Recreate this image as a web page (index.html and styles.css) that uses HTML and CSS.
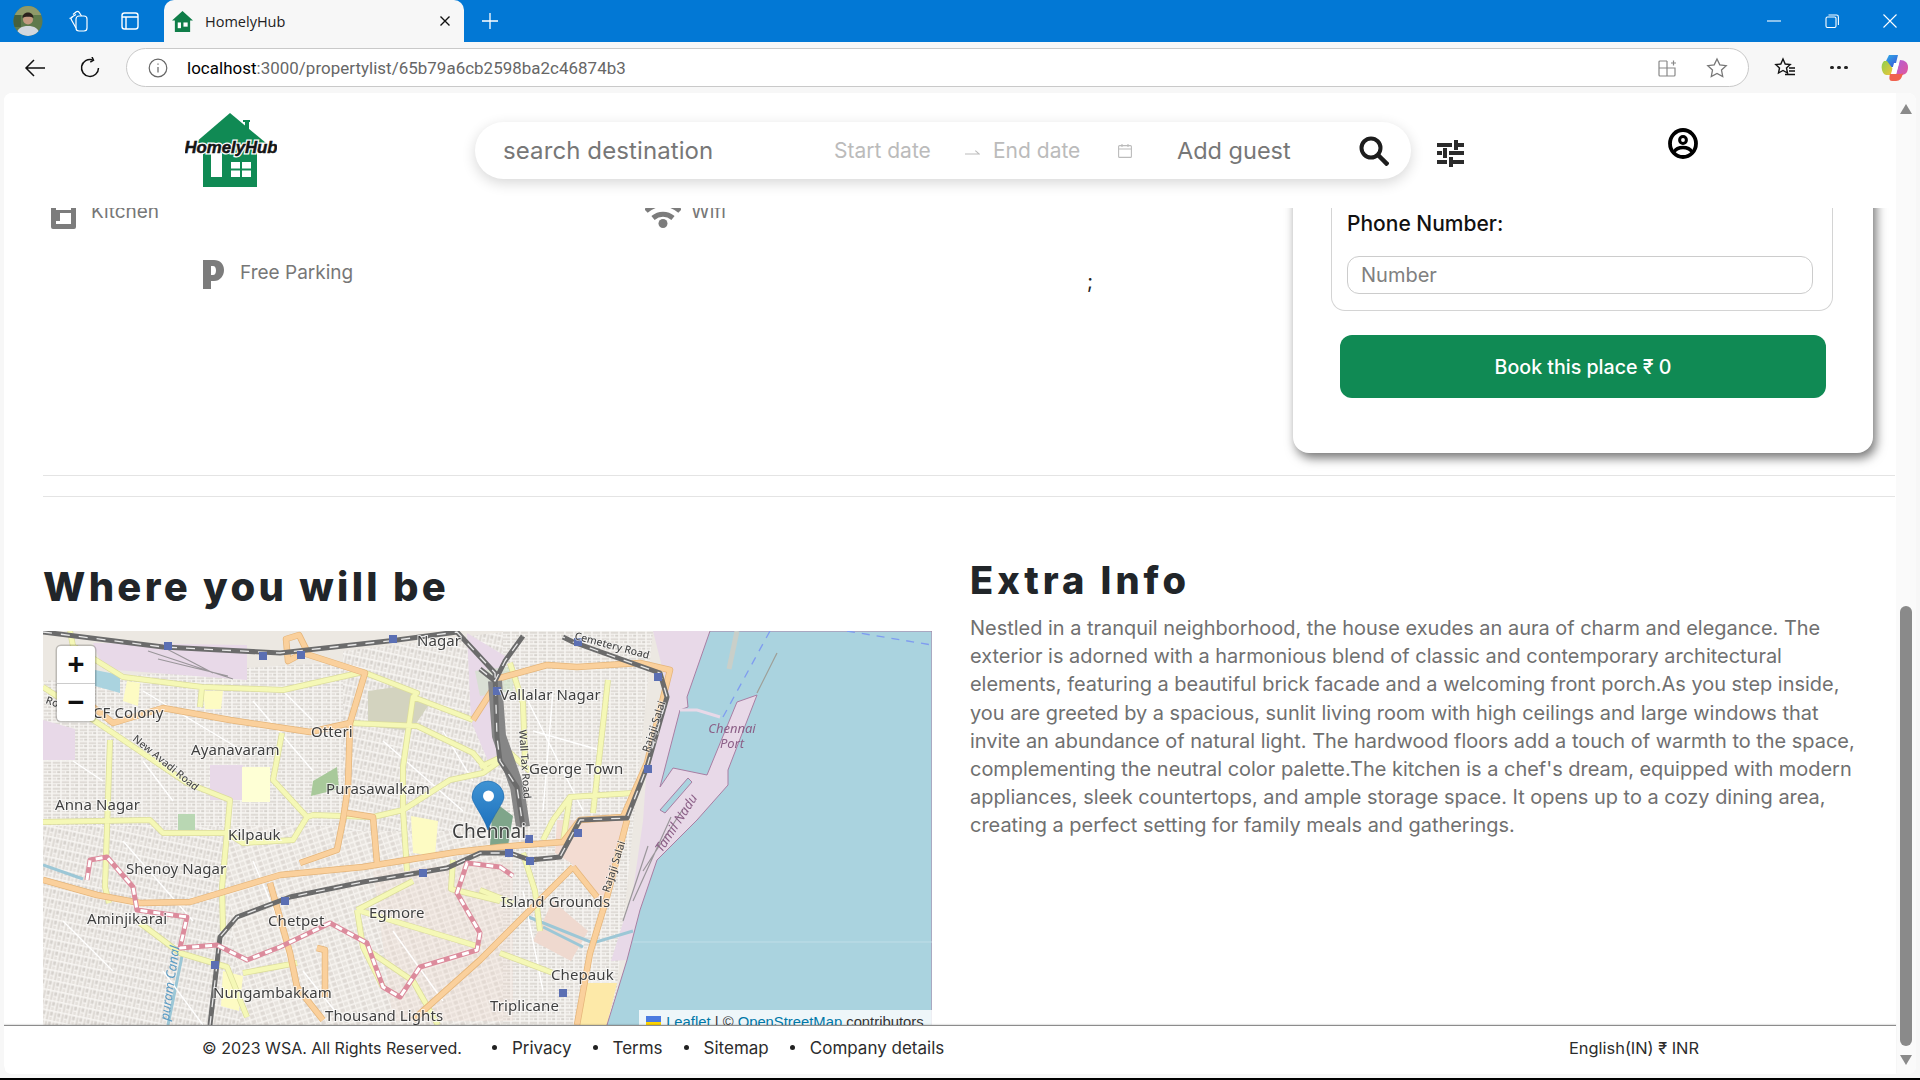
FILE: index.html
```html
<!DOCTYPE html>
<html lang="en">
<head>
<meta charset="utf-8">
<title>HomelyHub</title>
<link rel="stylesheet" href="styles.css">
</head>
<body>
<div class="window">
  <div class="titlebar">
    <svg class="avatar" viewBox="0 0 30 30"><defs><clipPath id="av"><ellipse cx="15" cy="15" rx="14.500" ry="15"/></clipPath></defs><g clip-path="url(#av)"><rect width="30" height="30" fill="#5f7a4c"/><rect y="0" width="30" height="9" fill="#8f9a6a"/><rect x="0" y="9" width="8" height="12" fill="#47603c"/><path d="M3 30c1-8 6-10 12-10s11 2 12 10z" fill="#d3d8de"/><circle cx="15" cy="13.500" r="5" fill="#c39a80"/><path d="M9.500 12c0-4 3-5.500 5.500-5.500s5.500 1.500 5.500 5.500c-2-1.800-9-1.800-11 0z" fill="#2a211c"/></g></svg>
    <svg class="tb-icon tb-collections" viewBox="0 0 24 24" fill="none" stroke="#fff" stroke-width="1.200"><rect x="10" y="7" width="11" height="15" rx="3"/><path d="M10 19 5.500 11c-.8-1.400-.4-2.600.8-3.300L10 5.600M6.800 8 3.500 9.500M7 5.500l3-2.500c1.200-.8 2.400-.6 3.200.4L15.500 7"/></svg>
    <svg class="tb-icon tb-tabs" viewBox="0 0 24 24" fill="none" stroke="#fff" stroke-width="1.400"><rect x="4" y="4" width="16" height="16" rx="2.500"/><path d="M4 8h16M8 8v12" /></svg>
    <div class="tab">
      <svg class="favicon" viewBox="0 0 22 22"><path d="M11 0 22 10H19V22H3V10H0Z" fill="#0f7d48"/><rect x="6" y="12" width="3.400" height="6" fill="#fff"/><rect x="12" y="12" width="4.400" height="4.400" fill="#fff"/></svg>
      <span class="tab-title">HomelyHub</span>
      <svg class="tab-close" viewBox="0 0 12 12" stroke="#111" stroke-width="1.400"><path d="M1.500 1.500l9 9M10.500 1.500l-9 9"/></svg>
    </div>
    <svg class="tab-new" viewBox="0 0 18 18" stroke="#fff" stroke-width="1.300"><path d="M9 1v16M1 9h16"/></svg>
    <div class="win-controls">
      <svg viewBox="0 0 14 14" stroke="#fff" stroke-width="1.100" fill="none"><path d="M0 7h14"/></svg>
      <svg viewBox="0 0 14 14" stroke="#fff" stroke-width="1.100" fill="none"><rect x="1" y="3" width="10" height="10.500" rx="1.500"/><path d="M3.500 1h8c1.200 0 1.900.7 1.900 1.900V11"/></svg>
      <svg viewBox="0 0 14 14" stroke="#fff" stroke-width="1.100" fill="none"><path d="M.5.5l13 13M13.500.5l-13 13"/></svg>
    </div>
  </div>

  <div class="toolbar">
    <svg class="nav-ic ic-back" viewBox="0 0 22 22" fill="none" stroke="#111" stroke-width="1.500"><path d="M21 11H2M10 3l-8 8 8 8"/></svg>
    <svg class="nav-ic ic-reload" viewBox="0 0 22 22" fill="none" stroke="#111" stroke-width="1.500"><path d="M13.500 2.800A8.500 8.500 0 1 0 19.500 11"/><path d="M13 0l1.500 3.200-3.200 2"/></svg>
    <div class="address">
      <svg class="ic-info" viewBox="0 0 20 20" fill="none" stroke="#666" stroke-width="1.200"><circle cx="10" cy="10" r="8.800"/><path d="M10 9v5.500M10 5.500v1.300"/></svg>
      <span class="url"><span class="url-host">localhost</span>:3000/propertylist/65b79a6cb2598ba2c46874b3</span>
      <svg class="addr-ic" viewBox="0 0 20 20" fill="none" stroke="#888" stroke-width="1.200"><path d="M10 3H3a1 1 0 0 0-1 1v13a1 1 0 0 0 1 1h14a1 1 0 0 0 1-1v-7H2M10 3v15M14 5h5M16.500 2.500v5"/></svg>
      <svg class="addr-ic addr-star" viewBox="0 0 22 22" fill="none" stroke="#777" stroke-width="1.300"><path d="M11 2l2.800 5.900 6.400.8-4.700 4.400 1.200 6.400L11 16.400l-5.700 3.100 1.200-6.400L1.800 8.700l6.400-.8z"/></svg>
    </div>
    <svg class="tool-ic ic-favs" viewBox="0 0 22 22" fill="none" stroke="#111" stroke-width="1.400"><path d="M9 2l2.200 5 5 .6-3.700 3.400 1 5L9 13.500 4.500 16l1-5L1.800 7.600l5-.6zM15 11h6M15 14h6M11 17.500h10"/></svg>
    <div class="ic-dots"><i></i><i></i><i></i></div>
    <svg class="ic-copilot" viewBox="0 0 28 28"><defs><linearGradient id="cp1" x1="0" y1="0" x2="1" y2="1"><stop offset="0" stop-color="#2fb6e8"/><stop offset="1" stop-color="#3a4fd8"/></linearGradient><linearGradient id="cp2" x1="0" y1="0" x2="1" y2="1"><stop offset="0" stop-color="#b05fd8"/><stop offset="1" stop-color="#e3569a"/></linearGradient><linearGradient id="cp3" x1="0" y1="0" x2="1" y2="1"><stop offset="0" stop-color="#8ccf4f"/><stop offset="1" stop-color="#f2c63a"/></linearGradient></defs><path d="M8 1h9l-3 12H2z" fill="url(#cp1)"/><path d="M19 6c5 0 8 3 8 7 0 6-3 8-7 8h-5z" fill="url(#cp2)"/><path d="M6 7H3C1 9 0 12 1 16c1 4 3 5 5 5h4l2-6z" fill="url(#cp3)"/><path d="M9 20h10c1 0 2 0 3-1-1 5-3 8-7 8h-4c-3 0-3-3-2-7z" fill="#f0624f"/><path d="M13 9h5l-3 11h-5z" fill="#fff"/></svg>
  </div>

  <div class="page">
    <div class="page-main">
      <header class="nav">
        <svg class="logo" viewBox="0 0 92 76">
          <path d="M45 0 81 30H10Z" fill="#108a54"/><path d="M58 7h7v2h-1v12h-4V9h-2z" fill="#108a54"/>
          <rect x="18" y="30" width="54" height="44" fill="#108a54"/>
          <rect x="26" y="40" width="11" height="24" fill="#fff"/>
          <rect x="46" y="49" width="9" height="6.500" fill="#fff"/><rect x="57" y="49" width="9" height="6.500" fill="#fff"/><rect x="46" y="57.500" width="9" height="6.500" fill="#fff"/><rect x="57" y="57.500" width="9" height="6.500" fill="#fff"/>
          <text class="logo-halo" x="46" y="40" text-anchor="middle">HomelyHub</text>
          <text class="logo-text" x="46" y="40" text-anchor="middle">HomelyHub</text>
        </svg>
        <div class="search">
          <span class="s-dest">search destination</span>
          <span class="s-date s-start">Start date</span>
          <svg class="s-arrow" viewBox="0 0 16 8" fill="none" stroke="#bbb" stroke-width="1.200"><path d="M0 5h15L11 1.500"/></svg>
          <span class="s-date s-end">End date</span>
          <svg class="s-cal" viewBox="0 0 14 14" fill="none" stroke="#bbb" stroke-width="1.100"><rect x=".6" y="1.600" width="12.800" height="11.800" rx="1"/><path d="M.6 5h12.800M4 0v3M10 0v3"/></svg>
          <span class="s-guest">Add guest</span>
          <svg class="s-go" viewBox="0 0 30 30" fill="none" stroke="#1d1d1d" stroke-width="4"><circle cx="12" cy="12" r="9.500"/><path d="M19 19l10 10" stroke-width="4.500"/></svg>
        </div>
        <svg class="filter" viewBox="0 0 27 27" fill="#2b2b2b"><rect y="3" width="15" height="4"/><rect x="21" y="3" width="6" height="4"/><rect x="17" y="0" width="4" height="10"/><rect y="11" width="5" height="4"/><rect x="12" y="11" width="15" height="4"/><rect x="6" y="8" width="4" height="10"/><rect y="20" width="10" height="4"/><rect x="16" y="20" width="11" height="4"/><rect x="12" y="17" width="4" height="10"/></svg>
        <svg class="profile" viewBox="0 0 30 31" fill="none" stroke="#000" stroke-width="3.800"><ellipse cx="15" cy="15.500" rx="13" ry="13.500"/><circle cx="15" cy="12" r="3.400" stroke-width="3"/><path d="M6 24c2-3.500 5.500-4.500 9-4.500s7 1 9 4.500" stroke-width="3.400"/></svg>
      </header>

      <main class="scroll">
        <section class="top-section">
          <div class="amenities">
            <div class="am-row am-row-1">
              <div class="am am-kitchen">
                <svg class="am-ic-kitchen" viewBox="0 0 25 34" fill="#7c7c7c"><path d="M2 0h21a2 2 0 0 1 2 2v30a2 2 0 0 1-2 2H2a2 2 0 0 1-2-2V2a2 2 0 0 1 2-2zm3 5v10h15V5zm0 13v11h15V18H9v8H5z" fill-rule="evenodd"/></svg>
                <span>Kitchen</span>
              </div>
              <div class="am am-wifi">
                <svg class="am-ic-wifi" viewBox="0 0 36 34" fill="none" stroke="#7c7c7c" stroke-width="5"><path d="M1 17c10-9 24-9 34 0M8 24c6-5 14-5 20 0"/><circle cx="18" cy="29.500" r="4.500" fill="#7c7c7c" stroke="none"/></svg>
                <span>Wifi</span>
              </div>
            </div>
            <div class="am-row am-row-2">
              <div class="am am-parking">
                <svg class="am-ic-p" viewBox="0 0 21 29" fill="#7c7c7c"><path d="M0 0h11c6 0 10 4 10 10s-4 11-10 11H8v8H0zm8 6v9h2c2 0 3-2 3-4.500S12 6 10 6z" fill-rule="evenodd"/></svg>
                <span>Free Parking</span>
              </div>
              <span class="semi">;</span>
            </div>
          </div>
          <aside class="card">
            <div class="card-box">
              <label class="phone-label">Phone Number:</label>
              <div class="phone-input">Number</div>
            </div>
            <button class="book">Book this place ₹ 0</button>
          </aside>
        </section>
        <hr class="rule">
        <hr class="rule rule-2">
        <section class="bottom-section">
          <div class="where">
            <h2 class="where-title">Where you will be</h2>
            <div class="map">
              <svg class="map-svg" viewBox="0 0 889 420" preserveAspectRatio="xMinYMin slice">
                <defs>
                  <pattern id="blocks" width="9" height="6.500" patternUnits="userSpaceOnUse"><rect width="9" height="6.500" fill="#f7f5f2"/><rect x=".7" y=".7" width="7.500" height="2" fill="#dedad5"/><rect x=".7" y="3.700" width="3.500" height="2" fill="#e3dfdb"/><rect x="5.200" y="3.700" width="3" height="2" fill="#d6d2cd"/></pattern>
                  <pattern id="blocks-a" width="7.500" height="10" patternUnits="userSpaceOnUse" patternTransform="rotate(12)"><rect width="7.500" height="10" fill="#f8f6f3"/><rect x=".6" y=".6" width="2.500" height="8.500" fill="#dfdbd6"/><rect x="4" y=".6" width="2.800" height="4" fill="#d6d2cd"/><rect x="4" y="5.800" width="2.800" height="3.200" fill="#e5e1dc"/></pattern>
                  <pattern id="blocks-b" width="11" height="5.500" patternUnits="userSpaceOnUse" patternTransform="rotate(-18)"><rect width="11" height="5.500" fill="#f6f3ef"/><rect x=".6" y=".6" width="4.300" height="3.800" fill="#dfdad5"/><rect x="6" y=".6" width="4" height="3.800" fill="#e7e3de"/></pattern>
                  <linearGradient id="pin" x1="0" y1="0" x2="0" y2="1"><stop offset="0" stop-color="#3f93d3"/><stop offset="1" stop-color="#1c70bd"/></linearGradient>
                  <path id="r-yellow" d="M0 56L70 102 144 152 187 169 179 256 180 300M67 109L62 256 66 272M0 191L107 189 120 202 184 202 200 212 250 209 264 186 270 184 330 186 360 179 407 149 440 142 457 130M239 102L230 149 264 186M320 41L374 62 370 66 360 136 360 179 364 240M307 92L374 95 430 122 445 140M370 66L430 89M410 229L408 258 457 270M314 279L370 250M314 279L437 316M314 279L320 316 340 356M97 292L137 322 184 336 204 386M200 342L254 332M320 316L370 350 395 394M27 0L30 15 80 46 159 56 240 59 320 41M159 56L157 76M565 49L550 182M467 32L480 72 482 130M510 189L500 209M510 189L527 166 590 162M527 166L520 211M480 222L492 260 497 300M437 136L467 122 487 140M437 259L470 272M457 322L510 342"/>
                  <path id="r-orange" d="M40 68L70 92 120 77 187 89 267 101 307 92 322 42 260 22 245 30 243 8 256 4 264 20M307 92L305 156 300 189 294 219 257 232M0 249L54 264 97 272 147 271 237 244 320 236 414 221 457 216 480 214 520 211 537 189 580 186 604 132 627 39 597 32 534 36 504 34 457 47 430 89M227 252L247 322 254 356 280 389M274 317L282 319 282 366M304 182L330 186 334 232M584 189L564 266 547 322 534 394M530 236L437 329 370 389M530 236L554 266"/>
                  <path id="r-rail" d="M0 1L120 16 237 22 354 9 414 1 452 42 454 106 457 130 474 156 480 196M167 394L177 306 194 286 247 266 320 251 404 237 437 222 467 222 487 229 517 226 537 189 584 187 604 136 624 66 617 42 530 11 520 6M437 38L452 50 462 30 480 5"/>
                </defs>
                <rect width="889" height="420" fill="#ece8e2"/>
                <polygon points="0,50 310,30 300,200 0,200" fill="url(#blocks)"/>
                <polygon points="0,195 190,195 230,420 0,420" fill="url(#blocks-a)"/>
                <polygon points="180,195 460,195 460,420 200,420" fill="url(#blocks-b)"/>
                <polygon points="300,20 470,0 470,200 300,200" fill="url(#blocks-a)"/>
                <polygon points="460,0 610,0 570,394 460,394" fill="url(#blocks)"/>
                <polygon points="330,240 470,230 470,390 350,390" fill="#f0d9d2" opacity=".3"/>
                <polygon points="50,12 204,14 204,49 60,38" fill="#e8d9e8"/>
                <path class="yard" d="M105 20L190 48M115 28L185 45M120 16L170 42"/>
                <polygon points="0,89 32,98 32,129 0,129" fill="#e8d9e8"/>
                <polygon points="167,134 200,134 200,169 167,169" fill="#e8d9e8"/>
                <polygon points="199,136 227,136 227,171 199,171" fill="#feffd5"/>
                <polygon points="424,2 462,25 457,130 445,130 428,90" fill="#e8d9e8"/>
                <polygon points="432,40 470,35 470,60 437,65" fill="#cfe3c6" opacity=".6"/>
                <polygon points="514,189 584,190 566,262 553,268 528,232 512,222" fill="#f3dcd2"/>
                <polygon points="510,270 545,300 528,330 490,310" fill="#efd9cf"/>
                <polygon points="52,39 77,44 77,62 52,55" fill="#aad3df"/>
                <polygon points="84,50 97,52 95,75 80,70" fill="#fdfbc3"/>
                <polygon points="160,60 180,60 178,78 162,78" fill="#fdfbc3"/>
                <polygon points="360,55 385,75 368,100 325,95 325,60" fill="#d3d3bf"/>
                <polygon points="135,183 152,183 152,200 135,200" fill="#b9d7b3"/>
                <polygon points="270,150 294,136 296,158 268,165" fill="#a8c99a"/>
                <polygon points="180,340 200,345 196,380 178,375" fill="#fdfbc3"/>
                <polygon points="368,185 395,190 392,225 370,222" fill="#fdfbc3"/>
                <polygon points="450,170 470,185 465,215 447,215" fill="#7fa58a"/>
                <polygon points="610,0 665,0 714,64 685,154 654,189 614,229 597,279 584,329 568,330 590,260 600,190 604,132 625,60" fill="#e8d9e8"/>
                <path class="yard" d="M640 178L600 240M628 186L590 270M605 215L580 290"/>
                <polygon points="544,352 574,352 564,394 534,394" fill="#fde9a8"/>
                <polygon points="667,0 889,0 889,420 556,420 584,329 597,279 614,229 654,189 685,154 685,139 714,64 694,71 664,144 630,137 617,156 637,79 645,76 644,66" fill="#aad3df" stroke="#a87ea3" stroke-width="1"/>
                <polygon points="617,179 645,147 649,151 622,182" fill="#aad3df" stroke="#a87ea3" stroke-width="1"/>
                <path class="pier" d="M637 79L654 79 677 86"/>
                <path class="breakwater" d="M734 22L714 62"/>
                <path class="islet" d="M694 0L686 38"/>
                <path class="boundary" d="M727 0L680 86M804 0L889 14"/>
                <path class="tile-line" d="M590 311H889"/>
                <path class="water-line" d="M0 234L40 248M483 285L550 312 590 300M500 296L540 316M125 394L140 320"/>
                <g class="streets">
                  <path d="M100 60L200 120M210 70L270 140M340 110L420 180M480 60L540 180M490 100L560 120M510 60L500 180M80 210L150 290M210 230L240 300M350 300L400 370M120 340L160 394M260 340L300 390M480 260L500 360M30 130L60 150M100 130L130 170M20 290L70 340M240 60L270 90M400 100L430 150"/>
                </g>
                <use href="#r-yellow" class="casing-y"/>
                <use href="#r-yellow" class="fill-y"/>
                <use href="#r-orange" class="casing-o"/>
                <use href="#r-orange" class="fill-o"/>
                <path class="rail-yard" d="M452 50L456 105 474 156 480 196"/>
                <use href="#r-rail" class="rail-a"/>
                <use href="#r-rail" class="rail-b"/>
                <path class="metro-a" d="M44 249L47 229 64 226 90 256 94 279 144 286 137 317 174 314 204 329 237 316 287 292 324 312 340 356 357 366 377 336 434 319 437 302 414 262 424 232 457 236 470 245"/>
                <path class="metro-b" d="M44 249L47 229 64 226 90 256 94 279 144 286 137 317 174 314 204 329 237 316 287 292 324 312 340 356 357 366 377 336 434 319 437 302 414 262 424 232 457 236 470 245"/>
                <g class="stations">
                  <rect x="121" y="11" width="8" height="8"/><rect x="216" y="21" width="8" height="8"/><rect x="254" y="20" width="8" height="8"/><rect x="346" y="4" width="8" height="8"/>
                  <rect x="450" y="56" width="8" height="8"/><rect x="531" y="7" width="8" height="8"/><rect x="611" y="42" width="8" height="8"/><rect x="601" y="134" width="8" height="8"/>
                  <rect x="482" y="204" width="8" height="8"/><rect x="531" y="198" width="8" height="8"/><rect x="462" y="218" width="8" height="8"/><rect x="483" y="226" width="8" height="8"/>
                  <rect x="376" y="238" width="8" height="8"/><rect x="238" y="266" width="8" height="8"/><rect x="168" y="330" width="8" height="8"/><rect x="516" y="358" width="8" height="8"/>
                </g>
                <g class="labels">
                  <text x="374" y="15">Nagar</text><text x="50" y="87">CF Colony</text><text x="268" y="106">Otteri</text><text x="148" y="124">Ayanavaram</text>
                  <text x="283" y="163">Purasawalkam</text><text x="12" y="179">Anna Nagar</text><text x="185" y="209">Kilpauk</text><text x="83" y="243">Shenoy Nagar</text>
                  <text x="44" y="293">Aminjikarai</text><text x="225" y="295">Chetpet</text><text x="326" y="287">Egmore</text><text x="170" y="367">Nungambakkam</text>
                  <text x="282" y="390">Thousand Lights</text><text class="lb-big" x="409" y="207">Chennai</text><text x="457" y="69">Vallalar Nagar</text><text x="486" y="143">George Town</text>
                  <text x="458" y="276">Island Grounds</text><text x="508" y="349">Chepauk</text><text x="447" y="380">Triplicane</text>
                </g>
                <g class="labels-road">
                  <text transform="translate(89 109) rotate(39)">New Avadi Road</text>
                  <text transform="translate(476 99) rotate(86)">Wall Tax Road</text>
                  <text transform="translate(606 122) rotate(-72)">Rajaji Salai</text>
                  <text transform="translate(566 262) rotate(-72)">Rajaji Salai</text>
                  <text transform="translate(531 8) rotate(15)">Cemetery Road</text>
                  <text transform="translate(2 72) rotate(20)">Ro</text>
                </g>
                <g class="labels-port">
                  <text x="689" y="102" text-anchor="middle">Chennai</text><text x="689" y="117" text-anchor="middle">Port</text>
                  <text transform="translate(619 222) rotate(-57)">Tamil Nadu</text>
                </g>
                <text class="label-canal" transform="translate(126 390) rotate(-82)">puram Canal</text>
                <path class="pin" d="M445 199C440 184 429 172 429 166a16 16 0 0 1 32 0C461 172 450 184 445 199Z"/>
                <circle cx="445.500" cy="165" r="5.500" fill="#fff"/>
              </svg>
              <div class="zoomctl"><span class="zoom-btn">+</span><span class="zoom-btn">−</span></div>
              <div class="attrib">
                <svg class="flag" viewBox="0 0 15 12"><rect width="15" height="6" fill="#4c7be0"/><rect y="6" width="15" height="6" fill="#ffd500"/></svg>
                <a class="attr-link">Leaflet</a> | © <a class="attr-link">OpenStreetMap</a> contributors
              </div>
            </div>
          </div>
          <div class="extra">
            <h2 class="extra-title">Extra Info</h2>
            <p class="extra-text">Nestled in a tranquil neighborhood, the house exudes an aura of charm and elegance. The<br>exterior is adorned with a harmonious blend of classic and contemporary architectural<br>elements, featuring a beautiful brick facade and a welcoming front porch.As you step inside,<br>you are greeted by a spacious, sunlit living room with high ceilings and large windows that<br>invite an abundance of natural light. The hardwood floors add a touch of warmth to the space,<br>complementing the neutral color palette.The kitchen is a chef's dream, equipped with modern<br>appliances, sleek countertops, and ample storage space. It opens up to a cozy dining area,<br>creating a perfect setting for family meals and gatherings.</p>
          </div>
        </section>
      </main>

      <footer class="footer">
        <span>© 2023 WSA. All Rights Reserved.</span>
        <ul class="foot-links">
          <li>Privacy</li><li>Terms</li><li>Sitemap</li><li>Company details</li>
        </ul>
        <span class="foot-lang">English(IN) ₹ INR</span>
      </footer>
    </div>
    <div class="scrollbar">
      <span class="sb-up"></span>
      <span class="sb-thumb"></span>
      <span class="sb-down"></span>
    </div>
  </div>
  <div class="taskbar-edge"></div>
</div>
</body>
</html>
```
FILE: styles.css
```css
* { box-sizing: border-box; }
html, body { margin: 0; height: 100%; overflow: hidden; }
body { font-family: Inter, "Liberation Sans", sans-serif; background: #f7f7f7; color: #222; }
.window { width: 1920px; height: 1080px; display: flex; flex-direction: column; background: #f7f7f7; }

/* browser title bar */
.titlebar { height: 42px; background: #0278d5; display: flex; align-items: center; flex: none; }
.avatar { width: 30px; height: 30px; margin-left: 13px; flex: none; }
.tb-icon { width: 24px; height: 24px; flex: none; }
.tb-collections { margin-left: 23px; }
.tb-tabs { margin-left: 28px; }
.tab { width: 300px; height: 42px; margin-left: 22px; background: #f7f7f7; border-radius: 10px 10px 0 0; display: flex; align-items: center; flex: none; align-self: flex-end; }
.favicon { width: 21px; height: 21px; margin-left: 8px; }
.tab-title { margin-left: 12px; font: 14.500px "Open Sans", sans-serif; color: #222; width: 234px; }
.tab-close { width: 12px; height: 12px; }
.tab-new { width: 18px; height: 18px; margin-left: 17px; }
.win-controls { margin-left: auto; margin-right: 23px; display: flex; gap: 44px; }
.win-controls svg { width: 14px; height: 14px; }

/* browser toolbar */
.toolbar { height: 51px; background: #f7f7f7; display: flex; align-items: center; flex: none; }
.nav-ic { width: 22px; height: 22px; flex: none; }
.ic-back { margin-left: 24px; }
.ic-reload { margin-left: 33px; }
.address { width: 1623px; height: 39px; margin-left: 25px; padding-right: 20px; background: #fff; border: 1px solid #c9c9c9; border-radius: 20px; display: flex; align-items: center; flex: none; }
.ic-info { width: 20px; height: 20px; margin-left: 21px; flex: none; }
.url { flex: 1; margin-left: 19px; font: 16.900px Roboto, sans-serif; color: #666; letter-spacing: .05px; }
.url-host { color: #000; }
.addr-ic { width: 20px; height: 20px; flex: none; }
.addr-star { width: 22px; height: 22px; margin-left: 29px; }
.tool-ic { width: 22px; height: 22px; margin-left: 25px; flex: none; }
.ic-dots { display: flex; gap: 3.500px; margin-left: 34px; }
.ic-dots i { width: 3.500px; height: 3.500px; background: #222; border-radius: 50%; }
.ic-copilot { width: 28px; height: 28px; margin-left: 33px; flex: none; }

/* page viewport */
.page { flex: 1; min-height: 0; margin: 0 4px; background: #fff; border-radius: 8px; display: flex; overflow: hidden; }
.page-main { width: 1892px; display: flex; flex-direction: column; flex: none; }
.scrollbar { width: 20px; background: #fafafa; display: flex; flex-direction: column; align-items: center; padding-top: 11px; flex: none; }
.sb-up { width: 0; height: 0; border-left: 6.500px solid transparent; border-right: 6.500px solid transparent; border-bottom: 10px solid #8a8a8a; }
.sb-thumb { width: 12px; height: 440px; background: #8a8a8a; border-radius: 6px; margin-top: 492px; }
.sb-down { width: 0; height: 0; border-left: 6.500px solid transparent; border-right: 6.500px solid transparent; border-top: 10px solid #8a8a8a; margin-top: 9px; }

/* site nav */
.nav { height: 115px; display: flex; align-items: center; flex: none; background: #fff; position: relative; z-index: 2; }
.logo { width: 92px; height: 76px; margin-left: 181px; flex: none; align-self: flex-start; margin-top: 20px; }
.logo-text, .logo-halo { font: italic 800 16.800px "Liberation Sans", sans-serif; }
.logo-text { fill: #151515; stroke: #151515; stroke-width: .5px; }
.logo-halo { fill: #fff; stroke: #fff; stroke-width: 3px; }
.search { width: 936px; height: 57px; margin-left: 198px; background: #fff; border-radius: 29px; box-shadow: 0 4px 14px rgba(0,0,0,.16); display: flex; align-items: center; flex: none; }
.s-dest { margin-left: 28px; font-size: 24px; color: #777; width: 331px; flex: none; letter-spacing: .1px; }
.s-date { font-size: 21px; color: #bbb; flex: none; }
.s-start { width: 131px; }
.s-arrow { width: 15px; height: 8px; flex: none; margin-top: 4px; }
.s-end { margin-left: 13px; width: 125px; }
.s-cal { width: 14px; height: 14px; flex: none; }
.s-guest { margin-left: 45px; font-size: 23.500px; color: #777; width: 182px; flex: none; }
.s-go { width: 30px; height: 30px; flex: none; }
.filter { width: 27px; height: 27px; margin-left: 26px; margin-top: 6px; flex: none; }
.profile { width: 30px; height: 31px; margin-left: 204px; flex: none; align-self: flex-start; margin-top: 35px; }

/* scrolled content */
.scroll { flex: 1; min-height: 0; overflow: hidden; padding: 0 1px 0 39px; }
.top-section { display: flex; height: 287px; margin-top: -20px; }
.amenities { flex: 1; min-width: 0; }
.am { display: flex; align-items: flex-start; color: #777; font-size: 19px; }
.am-row { display: flex; }
.am-row-1 { padding-left: 8px; height: 72px; }
.am-kitchen { width: 594px; }
.am-ic-kitchen { width: 25px; height: 34px; margin-right: 15px; margin-top: 7px; flex: none; }
.am-wifi .am-ic-wifi { width: 36px; height: 34px; margin-right: 10px; margin-top: 6px; flex: none; }
.am span { line-height: 24px; }
.am-kitchen span, .am-wifi span { margin-top: 12px; }
.am-row-2 { padding-left: 160px; }
.am-parking { width: 884px; }
.am-ic-p { width: 21px; height: 29px; margin-right: 16px; flex: none; }
.am-parking span { line-height: 25px; }
.semi { font-size: 20px; color: #222; margin-top: 9px; line-height: 24px; }
.card { width: 580px; margin-right: 22px; margin-bottom: 22px; background: #fff; border-radius: 0 0 16px 16px; box-shadow: 3px 5px 11px rgba(0,0,0,.55); flex: none; }
.card-box { margin: 0 40px 0 38px; height: 123px; border: 1px solid #d4d4d4; border-top: 0; border-radius: 0 0 14px 14px; padding: 21px 19px 0 15px; }
.phone-label { display: block; font-size: 21px; font-weight: 500; color: #111; line-height: 30px; }
.phone-input { margin-top: 17px; height: 38px; border: 1px solid #ccc; border-radius: 12px; padding-left: 13px; font-size: 20px; line-height: 37px; color: #808080; }
.book { display: block; width: 486px; height: 63px; margin: 24px 0 0 47px; border: 0; border-radius: 12px; background: #108a54; color: #fff; font: 500 19.600px Inter, sans-serif; }
.rule { border: 0; border-top: 1px solid #e4e4e4; margin: 0; height: 0; }
.rule-2 { margin-top: 20px; }
.bottom-section { display: grid; grid-template-columns: 889px 1fr; column-gap: 38px; }
.where-title { margin: 65px 0 19px; font-size: 40px; line-height: 50px; font-weight: 800; letter-spacing: 3.300px; color: #212529; }
.map { position: relative; height: 420px; overflow: hidden; }
.map-svg { display: block; width: 889px; height: 420px; filter: blur(.45px); }
.yard { fill: none; stroke: #9a969a; stroke-width: 1.200; }
.pier { fill: none; stroke: #e8d9e8; stroke-width: 3; }
.breakwater { fill: none; stroke: #9e9e96; stroke-width: 1.200; }
.islet { fill: none; stroke: #c9cfc9; stroke-width: 5; }
.boundary { fill: none; stroke: #7f9cf0; stroke-width: 1.300; stroke-dasharray: 8 7; }
.tile-line { stroke: #c6e2ea; stroke-width: .8; }
.water-line { fill: none; stroke: #9cc7d6; stroke-width: 3; }
.streets path { fill: none; stroke: #fff; stroke-width: 1.400; }
.casing-y { fill: none; stroke: #dcdd9c; stroke-width: 6; stroke-linejoin: round; }
.fill-y { fill: none; stroke: #f5f8b6; stroke-width: 4.500; stroke-linejoin: round; }
.casing-o { fill: none; stroke: #e5b57a; stroke-width: 6.500; stroke-linejoin: round; }
.fill-o { fill: none; stroke: #fad09c; stroke-width: 5; stroke-linejoin: round; }
.rail-yard { fill: none; stroke: #868686; stroke-width: 14; stroke-linejoin: round; }
.rail-a { fill: none; stroke: #6b6b6b; stroke-width: 5; stroke-linejoin: round; }
.rail-b { fill: none; stroke: #e8e8e8; stroke-width: 1.300; stroke-dasharray: 9 9; stroke-linejoin: round; }
.metro-a { fill: none; stroke: #dc8b9c; stroke-width: 5; stroke-linejoin: round; }
.metro-b { fill: none; stroke: #fff; stroke-width: 3; stroke-dasharray: 7 6; stroke-linejoin: round; }
.stations rect { fill: #5b6fb3; }
.labels text { font: 15px "Noto Sans", sans-serif; fill: #3f3f3f; stroke: rgba(255,255,255,.7); stroke-width: 2px; paint-order: stroke; letter-spacing: .1px; }
.labels .lb-big { font-size: 19px; }
.labels-road text { font: 500 10.500px "Noto Sans", sans-serif; fill: #4a4a4a; stroke: rgba(255,255,255,.6); stroke-width: 1.500px; paint-order: stroke; }
.labels-port text { font: italic 13px "Noto Sans", sans-serif; fill: #8b5f87; }
.label-canal { font: italic 13px "Noto Sans", sans-serif; fill: #5a9bc4; }
.pin { fill: url(#pin); stroke: #1a64aa; stroke-width: .6; }
.zoomctl { position: absolute; left: 14px; top: 15px; width: 38px; height: 75px; background: #fff; border-radius: 4px; box-shadow: 0 0 0 1.500px rgba(0,0,0,.2); display: flex; flex-direction: column; }
.zoom-btn { flex: 1; display: flex; align-items: center; justify-content: center; font: 700 29px "Liberation Sans", sans-serif; color: #111; }
.zoom-btn + .zoom-btn { border-top: 1px solid #ccc; }
.attrib { position: absolute; right: 0; top: 379px; width: 293px; height: 26px; background: rgba(255,255,255,.8); padding: 3px 0 0 7px; font: 14.800px/18px "Liberation Sans", sans-serif; color: #333; white-space: nowrap; }
.flag { width: 15px; height: 12px; vertical-align: -1px; margin-right: 1px; }
.attr-link { color: #0078a8; }
.extra-title { margin: 58px 0 9px; font-size: 38px; line-height: 50px; font-weight: 800; letter-spacing: 4px; color: #212529; }
.extra-text { margin: 0; font-size: 19.950px; line-height: 28.200px; color: #707070; white-space: nowrap; }

/* footer */
.footer { height: 49px; flex: none; display: flex; align-items: center; padding: 0 197px 5px 198px; background: #fff; border-top: 1px solid #8c8c8c; box-shadow: 0 -1px 1px rgba(0,0,0,.1); font-size: 16px; color: #2c2c2c; position: relative; }
.foot-links { list-style: none; margin: 0 0 0 30px; padding: 0; display: flex; gap: 21px; font-size: 17px; }
.foot-links li { display: flex; align-items: center; }
.foot-links li::before { content: ""; width: 5px; height: 5px; border-radius: 50%; background: #222; margin-right: 15px; }
.foot-lang { margin-left: auto; font-size: 16.400px; }
.taskbar-edge { height: 2px; background: #000; flex: none; margin-top: 4px; }
```
